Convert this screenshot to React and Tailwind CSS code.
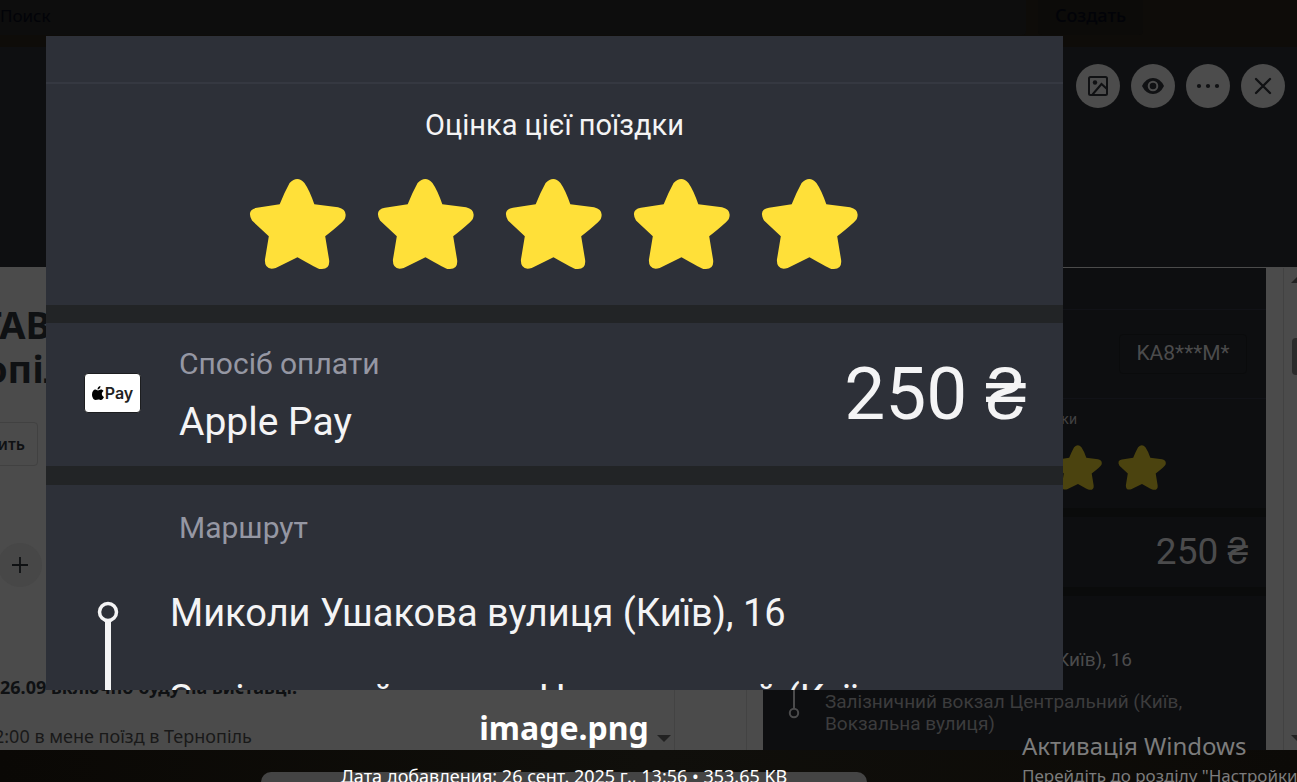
import React from "react";

const STAR =
  "M41 4 Q49 -4 56 4 Q61 11 66 25.500 L90 28.500 Q100 31 97 40 Q96 43 77 58 L81 82 Q82 92 72 91 Q70 91 49 79 L27 90 Q16 93 16 82 L20 58 L3 42 Q-3 31 8 29 L31 25.500 Q36 13 41 4 Z";

function Star({ className }) {
  return (
    <svg viewBox="0 0 98 91" className={className} overflow="visible" aria-hidden="true">
      <path d={STAR} fill="currentColor" />
    </svg>
  );
}

function RoundButton({ label, children }) {
  return (
    <button
      type="button"
      aria-label={label}
      className="flex size-11 shrink-0 items-center justify-center rounded-full bg-[#4c4c4c] text-[#101113]"
    >
      {children}
    </button>
  );
}

function TopBar() {
  return (
    <header className="flex h-[47px] shrink-0 items-start gap-3 bg-[#0e0c09] text-[#020308]">
      <input
        type="text"
        aria-label="Поиск"
        placeholder="Поиск"
        className="-ml-1 h-[35px] min-w-0 flex-1 rounded-br bg-[#0d0d0d] pb-1 pl-1 text-[17px] placeholder:text-[#020308]"
      />
      <button
        type="button"
        className="mr-[154px] h-[35px] w-[105px] rounded-b bg-[#0c0b09] pb-1 text-[18px] font-medium"
      >
        Создать
      </button>
    </header>
  );
}

function Cover() {
  return (
    <div className="flex h-[220px] shrink-0 items-start justify-end gap-[11px] bg-[#0e0f11] px-3 pt-[17px]">
      <RoundButton label="Обложка">
        <svg viewBox="0 0 20 20" className="size-5" fill="none" stroke="currentColor" strokeWidth="2">
          <rect x="1" y="1" width="18" height="18" rx="1.500" />
          <circle cx="7" cy="6.500" r="2.200" fill="currentColor" stroke="none" />
          <path d="M4.500 18.500 L13.500 8 L19 13" />
        </svg>
      </RoundButton>
      <RoundButton label="Следить">
        <svg viewBox="0 0 22 16" className="h-4 w-[22px]">
          <path d="M0 8 Q4 0 11 0 T22 8 Q18 16 11 16 T0 8Z" fill="currentColor" />
          <circle cx="11" cy="8" r="4.300" fill="none" stroke="#4c4c4c" strokeWidth="2" />
        </svg>
      </RoundButton>
      <RoundButton label="Меню">
        <svg viewBox="0 0 24 6" className="h-1.5 w-6" fill="currentColor">
          <circle cx="3" cy="3" r="2.100" />
          <circle cx="12" cy="3" r="2.100" />
          <circle cx="21" cy="3" r="2.100" />
        </svg>
      </RoundButton>
      <RoundButton label="Закрыть">
        <svg viewBox="0 0 18 18" className="size-[18px]" fill="none" stroke="currentColor" strokeWidth="2.300" strokeLinecap="round">
          <path d="M2 2 L16 16 M16 2 L2 16" />
        </svg>
      </RoundButton>
    </div>
  );
}

function CardColumn() {
  return (
    <div className="min-w-0 flex-1 overflow-hidden border-r border-[#434343] text-[#0f1113]">
      <h1 className="-ml-5 mt-[34px] text-[38px] leading-[44px] font-bold whitespace-nowrap">
        ТАВКА
        <br />
        <span className="pl-1">опіль</span>
      </h1>
      <button
        type="button"
        className="-ml-20 mt-8 flex h-11 w-[118px] items-center justify-end rounded border border-[#414141] pr-3 text-base font-semibold"
      >
        ить
      </button>
      <button
        type="button"
        aria-label="Добавить"
        className="-ml-0.5 mt-[77px] flex size-11 items-center justify-center rounded-full bg-[#474747]"
      >
        <svg viewBox="0 0 16 16" className="size-4" stroke="currentColor" strokeWidth="1.800">
          <path d="M0 8H16M8 0V16" />
        </svg>
      </button>
      <p className="mt-[88px] text-[18px] leading-6 font-bold whitespace-nowrap">
        26.09 включно буду на виставці.
      </p>
      <p className="-ml-1.5 mt-[25px] text-[18px] leading-6 whitespace-nowrap text-[#191919]">
        2:00 в мене поїзд в Тернопіль
      </p>
    </div>
  );
}

function Receipt() {
  return (
    <div className="flex w-[503px] shrink-0 flex-col bg-[#0d0e10] font-[Roboto,sans-serif] text-[#4b4b4c]">
      <div className="mt-[41px] flex h-[90px] items-center justify-end border-y border-[#111217] pr-[19px]">
        <span className="flex h-10 w-32 items-center justify-center rounded border border-[#0a0b0c] text-[21px]">KA8***M*</span>
      </div>
      <p className="pt-2.5 text-center text-[14px] leading-5 text-[#424243]">Оцінка цієї поїздки</p>
      <div className="mt-4 flex justify-end gap-4 pr-[100px] text-[#4b430f]">
        <Star className="h-[45px] w-12" />
        <Star className="h-[45px] w-12" />
      </div>
      <div className="mt-[18px] h-[9px] bg-[#0a0b0b]" />
      <p className="flex h-[70px] items-center justify-end pr-[18px] text-[37px]">250 ₴</p>
      <div className="h-[9px] bg-[#0a0b0b]" />
      <p className="mt-[52px] pr-[134px] text-right text-[19px] leading-6">Миколи Ушакова вулиця (Київ), 16</p>
      <div className="mt-[15px] flex gap-[25px] pl-[25px]">
        <svg viewBox="0 0 12 36" className="-mt-1 h-9 w-3 shrink-0" fill="none" stroke="currentColor" strokeWidth="2">
          <path d="M6 0V25" />
          <circle cx="6" cy="30" r="4.200" />
        </svg>
        <p className="mt-1 text-[19px] leading-[22px] text-[#3c3c3d]">
          Залізничний вокзал Центральний (Київ,
          <br />
          Вокзальна вулиця)
        </p>
      </div>
    </div>
  );
}

function Preview() {
  return (
    <div className="mr-[234px] ml-[46px] flex h-[654px] shrink-0 flex-col overflow-hidden bg-[#2d3038] font-[Roboto,sans-serif] text-[#f4f4f5]">
      <div className="h-12 shrink-0 border-b-2 border-[#353841]" />
      <section className="flex h-[221px] shrink-0 flex-col items-center pt-5">
        <h2 className="text-[29px] leading-[42px]">Оцінка цієї поїздки</h2>
        <div className="mt-[33px] flex gap-[31px] pr-0.5 text-[#ffe039]">
          {[1, 2, 3, 4, 5].map((n) => (
            <Star key={n} className="h-[90px] w-[97px]" />
          ))}
        </div>
      </section>
      <div className="h-[18px] shrink-0 bg-[#222426]" />
      <section className="flex h-[143px] shrink-0 items-center pr-[37px] pl-[38px]">
        <div className="mb-1 flex h-10 w-[57px] items-center justify-center gap-px rounded border border-[#1d1e20] bg-white font-[Inter,sans-serif] text-base font-semibold text-[#222]">
          <svg viewBox="0 0 24 28" className="h-[14px] w-3" fill="#000">
            <path d="M17 0c0 4-3 7-6 7 0-4 3-7 6-7zM12 9c2 0 3-2 6-2 2 0 4 1 5 3-5 3-4 10 1 12-2 4-4 6-6 6s-3-1-5-1-4 1-6 1C3 28 0 22 0 17 0 11 3 7 7 7c2 0 3 2 5 2z" />
          </svg>
          Pay
        </div>
        <div className="ml-[38px] flex-1">
          <p className="text-[30px] leading-10 text-[#9597a3]">Спосіб оплати</p>
          <p className="mt-3.5 text-[39px] leading-[48px]">Apple Pay</p>
        </div>
        <p className="text-[73px] leading-none">250 ₴</p>
      </section>
      <div className="h-[19px] shrink-0 bg-[#222426]" />
      <section className="shrink-0 pt-[23px]">
        <p className="pl-[133px] text-[30px] leading-10 text-[#9597a3]">Маршрут</p>
        <div className="mt-[41px] flex gap-[51px] pl-[51px]">
          <svg viewBox="0 0 22 100" className="mt-3 h-[100px] w-[22px] shrink-0" fill="none" stroke="currentColor">
            <circle cx="11" cy="11" r="8.500" strokeWidth="3.500" />
            <path d="M11 19V100" strokeWidth="6" />
          </svg>
          <div className="text-[38px] leading-[48px] whitespace-nowrap">
            <p>Миколи Ушакова вулиця (Київ), 16</p>
            <p className="mt-[38px]">Залізничний вокзал Центральний (Київ,</p>
          </div>
        </div>
      </section>
    </div>
  );
}

export default function App() {
  return (
    <div className="relative flex h-screen flex-col overflow-hidden bg-[#0e0f11] font-['Noto_Sans',sans-serif]">
      <TopBar />
      <Cover />
      <main className="flex min-h-0 flex-1 overflow-hidden border-t border-[#4b4b4b] bg-[#4b4b4b]">
        <CardColumn />
        <div className="mr-4 w-[72px] shrink-0 border-r border-[#434343]" />
        <Receipt />
        <div className="ml-[17px] flex w-[14px] shrink-0 flex-col items-end border-l border-[#424242] pt-[9px]">
          <svg viewBox="0 0 6 6" className="size-1.5" fill="#222"><path d="M0 6L6 0V6Z" /></svg>
          <div className="mt-[55px] h-[37px] w-[5px] rounded-l bg-[#2b2b2b]" />
          <svg viewBox="0 0 6 6" className="mt-auto mb-[9px] size-1.5" fill="#222"><path d="M0 0H6V6Z" /></svg>
        </div>
      </main>
      <footer className="flex h-8 shrink-0 items-end bg-linear-to-r from-[#0a0805] via-[#100f0b] to-[#0c0a07] pr-[430px] pl-[261px]">
        <div className="h-2.5 flex-1 rounded-t-xl bg-[#444]" />
      </footer>

      <div className="pointer-events-none absolute inset-0 flex flex-col overflow-hidden pt-9">
        <Preview />
        <div className="mr-[169px] flex shrink-0 flex-col items-center text-white">
          <p className="mt-4 text-[32px] leading-[44px] font-bold">image.png</p>
          <p className="mt-3.5 text-[18px] leading-6 whitespace-nowrap">
            Дата добавления: 26 сент. 2025 г., 13:56 • 353.65 KB
          </p>
        </div>
      </div>
      <svg viewBox="0 0 14 7" className="absolute top-[735px] left-[657px] h-[7px] w-3.5" fill="#222"><path d="M0 0H14L7 7Z" /></svg>
      <aside className="absolute top-[730px] left-[1022px] whitespace-nowrap text-[#7c7c7c]">
        <p className="text-2xl leading-8">Активація Windows</p>
        <p className="mt-0.5 text-[17px] leading-6">Перейдіть до розділу "Настройки</p>
      </aside>
    </div>
  );
}
